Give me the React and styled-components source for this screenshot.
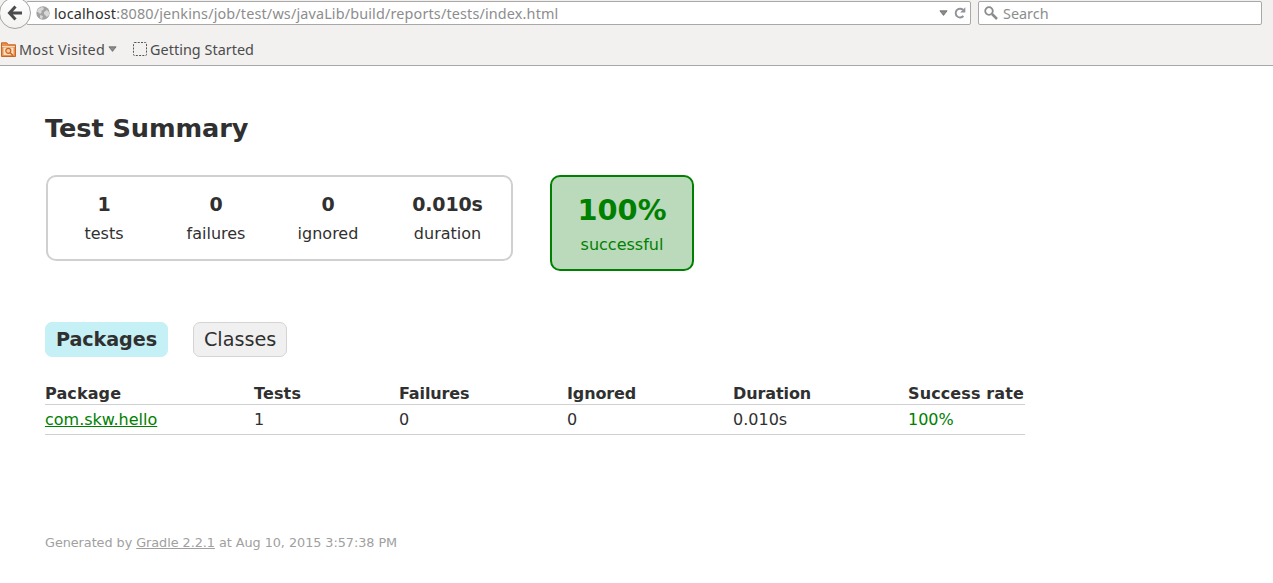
import React from 'react';
import styled, { createGlobalStyle } from 'styled-components';

const Global = createGlobalStyle`
  * { box-sizing: border-box; }
  body { margin: 0; background: #fff; color: #303030; font: 16px/19px "DejaVu Sans", sans-serif; overflow: hidden; }
  p, h1 { margin: 0; }
  svg { display: block; flex: none; }
`;

const Chrome = styled.header`
  height: 66px;
  background: #f2f1f0;
  border-bottom: 1px solid #a9a7a5;
  font-family: "Noto Sans", "Open Sans", sans-serif;
  font-size: 14.4px;
  color: #4c4c4c;
`;
const NavBar = styled.div`
  display: flex;
  height: 32px;
  align-items: flex-start;
`;
const BackButton = styled.div`
  width: 32px;
  height: 32px;
  margin: -3px 0 0 -1px;
  border: 1px solid #a5a3a1;
  border-radius: 50%;
  background: linear-gradient(#fff, #f3f2f1);
  display: flex;
  align-items: center;
  justify-content: center;
  position: relative;
  flex: none;
`;
const Field = styled.div`
  display: flex;
  align-items: center;
  height: 24px;
  margin-top: 1px;
  margin-left: ${(p) => p.$left}px;
  width: ${(p) => p.$width}px;
  padding: 0 ${(p) => p.$right}px 0 ${(p) => p.$pad}px;
  background: #fff;
  border: 1px solid #aaa8a6;
  border-radius: 2px;
`;
const Url = styled.span`
  margin-left: ${(p) => p.$gap}px;
  flex: 1;
  white-space: nowrap;
  color: #8d8d8d;
  letter-spacing: ${(p) => p.$spacing}px;
  b { font-weight: 400; color: #303030; }
`;
const FieldIcons = styled.div`
  display: flex;
  align-items: center;
  gap: 6px;
`;
const Bookmarks = styled.div`
  display: flex;
  align-items: center;
  height: 33px;
  padding: 2px 0 0 1px;
`;
const Bookmark = styled.div`
  display: flex;
  align-items: center;
  gap: 3px;
  margin-right: 16px;
  white-space: nowrap;
  letter-spacing: ${(p) => p.$spacing}px;
  svg { margin-top: -1px; }
`;

const Content = styled.main`
  padding: 47px 45px 0;
`;
const Title = styled.h1`
  font-size: 25.6px;
  line-height: 30px;
  letter-spacing: -0.08px;
`;
const Summary = styled.div`
  display: flex;
  align-items: flex-start;
  gap: 37px;
  margin: 32px 0 0 1px;
`;
const Group = styled.div`
  display: flex;
  height: 86px;
  width: 467px;
  border: 2px solid #d0d0d0;
  border-radius: 10px;
`;
const InfoBox = styled.div`
  width: ${(p) => p.$width || 112}px;
  padding-top: 16px;
  text-align: center;
`;
const Counter = styled.p`
  font-size: 19px;
  line-height: 23px;
  letter-spacing: -0.15px;
  font-weight: 700;
  margin-bottom: 8px;
`;
const SuccessRate = styled.div`
  width: 144px;
  height: 96px;
  padding-top: 16px;
  text-align: center;
  color: #008000;
  background: #bbd9bb;
  border: 2px solid #008000;
  border-radius: 10px;
`;
const Percent = styled.p`
  font-size: 28.8px;
  line-height: 35px;
  font-weight: 700;
  margin-bottom: 7px;
`;
const Tabs = styled.nav`
  display: flex;
  gap: 25px;
  margin-top: 51px;
`;
const Tab = styled.div`
  height: 35px;
  padding: 5px 10px;
  font-size: 19.2px;
  line-height: 23px;
  letter-spacing: ${(p) => (p.$active ? -0.1 : 0)}px;
  border: 1px solid ${(p) => (p.$active ? '#c5f0f5' : '#d4d4d4')};
  border-radius: 7px;
  background: ${(p) => (p.$active ? '#c5f0f5' : '#f0f0f0')};
  font-weight: ${(p) => (p.$active ? 700 : 400)};
`;
const Table = styled.div`
  width: 980px;
  margin-top: 27px;
`;
const Row = styled.div`
  display: grid;
  grid-template-columns: 209px 145px 168px 166px 175px 117px;
  height: ${(p) => (p.$head ? 21 : 30)}px;
  padding-top: ${(p) => (p.$head ? 0 : 5)}px;
  font-weight: ${(p) => (p.$head ? 700 : 400)};
  border-bottom: 1px solid #d0d0d0;
  white-space: nowrap;
`;
const HeadCell = styled.span`
  letter-spacing: ${(p) => p.$spacing}px;
`;
const Passed = styled.span`
  color: #008000;
`;
const PackageLink = styled.a`
  color: #008000;
  text-decoration: underline;
`;
const Footer = styled.footer`
  margin-top: 100px;
  font-size: 12.8px;
  line-height: 16px;
  letter-spacing: -0.04px;
  color: #a0a0a0;
  a { text-decoration: underline; }
`;

const BackIcon = () => (
  <svg width="16" height="16" viewBox="0 0 16 16" fill="none" stroke="#4b4b4b" strokeWidth="3">
    <path d="M8.5 1.5 2.5 8l6 6.5M3 8h12" />
  </svg>
);
const GlobeIcon = () => (
  <svg width="14" height="14" viewBox="0 0 14 14">
    <circle cx="7" cy="7" r="6.7" fill="#a2a2a2" />
    <path d="M2 3 6 1l2 1-1 2-2 1 1 1-2 2-2-2H1zM8 6l3-2 2 2v3l-2 2-2-2-1-1zM4 9l3 1-1 3-2-1z" fill="#d8d8d8" />
  </svg>
);
const Caret = () => (
  <svg width="9" height="6" viewBox="0 0 9 6"><path d="M.9.8h7.2L4.5 5.4z" fill="#8c8c8c" stroke="#686868" strokeWidth=".8" /></svg>
);
const ReloadIcon = () => (
  <svg width="12" height="12" viewBox="0 0 12 12">
    <path d="M9.4 9A4.4 4.4 0 1 1 9 2.8" fill="none" stroke="#929299" strokeWidth="1.9" />
    <path d="M11.3.3v5.2H6.2z" fill="#929299" />
  </svg>
);
const SearchIcon = () => (
  <svg width="14" height="14" viewBox="0 0 14 14" fill="none" stroke="#8c8c8c">
    <circle cx="5" cy="5" r="3.8" strokeWidth="1.8" /><path d="m8 8 5 5" strokeWidth="2.5" />
  </svg>
);
const FolderIcon = () => (
  <svg width="15" height="15" viewBox="0 0 15 15">
    <path d="M.5.8h5.3l1.5 2h7.2v11.7H.5z" fill="#e9904e" stroke="#c96520" />
    <path d="M1 4.5h13" stroke="#fbd9bd" />
    <rect x="2.5" y="5.5" width="10" height="7.5" fill="#fae0c9" />
    <circle cx="7.3" cy="8.8" r="2.5" fill="#f7c79f" stroke="#c96520" strokeWidth="1.2" />
    <path d="m9 10.5 3 3" stroke="#c96520" strokeWidth="1.5" />
  </svg>
);
const DashedIcon = () => (
  <svg width="14" height="14" viewBox="0 0 14 14">
    <rect x=".5" y=".5" width="13" height="13" rx="1" fill="none" stroke="#555" strokeDasharray="2 1.25" />
  </svg>
);

const counters = [['1', 'tests'], ['0', 'failures'], ['0', 'ignored'], ['0.010s', 'duration', 127]];
const columns = ['Package', 'Tests', 'Failures', 'Ignored', 'Duration', 'Success rate'];
const spacings = [0.12, 0.15, -0.12, -0.12, -0.1, 0.12];

export default function App() {
  return (
    <>
      <Global />
      <Chrome>
        <NavBar>
          <BackButton><BackIcon /></BackButton>
          <Field $left={-5} $width={945} $pad={9} $right={4}>
            <GlobeIcon />
            <Url $gap={4} $spacing={0.15}><b>localhost</b>:8080/jenkins/job/test/ws/javaLib/build/reports/tests/index.html</Url>
            <FieldIcons><Caret /><ReloadIcon /></FieldIcons>
          </Field>
          <Field $left={7} $width={284} $pad={5} $right={5}>
            <SearchIcon />
            <Url $gap={5} $spacing={0}>Search</Url>
          </Field>
        </NavBar>
        <Bookmarks>
          <Bookmark $spacing={0.28}><FolderIcon />Most Visited<Caret /></Bookmark>
          <Bookmark $spacing={0.03}><DashedIcon />Getting Started</Bookmark>
        </Bookmarks>
      </Chrome>
      <Content>
        <Title>Test Summary</Title>
        <Summary>
          <Group>
            {counters.map(([value, label, width]) => (
              <InfoBox key={label} $width={width}><Counter>{value}</Counter><p>{label}</p></InfoBox>
            ))}
          </Group>
          <SuccessRate><Percent>100%</Percent><p>successful</p></SuccessRate>
        </Summary>
        <Tabs><Tab $active>Packages</Tab><Tab>Classes</Tab></Tabs>
        <Table>
          <Row $head>{columns.map((c, i) => <HeadCell key={c} $spacing={spacings[i]}>{c}</HeadCell>)}</Row>
          <Row>
            <span><PackageLink>com.skw.hello</PackageLink></span>
            <span>1</span><span>0</span><span>0</span><span>0.010s</span><Passed>100%</Passed>
          </Row>
        </Table>
        <Footer>Generated by <a>Gradle 2.2.1</a> at Aug 10, 2015 3:57:38 PM</Footer>
      </Content>
    </>
  );
}
